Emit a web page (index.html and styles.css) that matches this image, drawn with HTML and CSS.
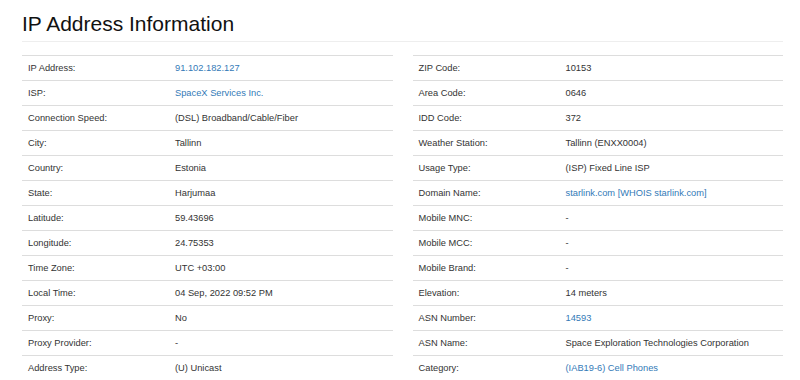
FILE: index.html
```html
<!DOCTYPE html>
<html>
<head>
<meta charset="utf-8">
<link rel="stylesheet" href="styles.css">
</head>
<body>
<div class="page">
  <h1 class="title">IP Address Information</h1>
  <div class="rule"></div>
  <div class="tables">
    <table class="info">
      <tr><td class="label">IP Address:</td><td><a class="link" href="#">91.102.182.127</a></td></tr>
      <tr><td class="label">ISP:</td><td><a class="link" href="#">SpaceX Services Inc.</a></td></tr>
      <tr><td class="label">Connection Speed:</td><td>(DSL) Broadband/Cable/Fiber</td></tr>
      <tr><td class="label">City:</td><td>Tallinn</td></tr>
      <tr><td class="label">Country:</td><td>Estonia</td></tr>
      <tr><td class="label">State:</td><td>Harjumaa</td></tr>
      <tr><td class="label">Latitude:</td><td>59.43696</td></tr>
      <tr><td class="label">Longitude:</td><td>24.75353</td></tr>
      <tr><td class="label">Time Zone:</td><td>UTC +03:00</td></tr>
      <tr><td class="label">Local Time:</td><td>04 Sep, 2022 09:52 PM</td></tr>
      <tr><td class="label">Proxy:</td><td>No</td></tr>
      <tr><td class="label">Proxy Provider:</td><td>-</td></tr>
      <tr><td class="label">Address Type:</td><td>(U) Unicast</td></tr>
    </table>
    <table class="info">
      <tr><td class="label">ZIP Code:</td><td>10153</td></tr>
      <tr><td class="label">Area Code:</td><td>0646</td></tr>
      <tr><td class="label">IDD Code:</td><td>372</td></tr>
      <tr><td class="label">Weather Station:</td><td>Tallinn (ENXX0004)</td></tr>
      <tr><td class="label">Usage Type:</td><td>(ISP) Fixed Line ISP</td></tr>
      <tr><td class="label">Domain Name:</td><td><a class="link" href="#">starlink.com [WHOIS starlink.com]</a></td></tr>
      <tr><td class="label">Mobile MNC:</td><td>-</td></tr>
      <tr><td class="label">Mobile MCC:</td><td>-</td></tr>
      <tr><td class="label">Mobile Brand:</td><td>-</td></tr>
      <tr><td class="label">Elevation:</td><td>14 meters</td></tr>
      <tr><td class="label">ASN Number:</td><td><a class="link" href="#">14593</a></td></tr>
      <tr><td class="label">ASN Name:</td><td>Space Exploration Technologies Corporation</td></tr>
      <tr><td class="label">Category:</td><td><a class="link" href="#">(IAB19-6) Cell Phones</a></td></tr>
    </table>
  </div>
</div>
</body>
</html>
```
FILE: styles.css
```css
html, body {
  margin: 0;
  padding: 0;
  background: #fff;
}
body {
  font-family: "Liberation Sans", Arial, Helvetica, sans-serif;
  color: #333;
  overflow: hidden;
}
.page {
  margin-left: 22px;
  width: 761px;
  padding-top: 12px;
}
.title {
  margin: 0;
  font-size: 21px;
  line-height: 24px;
  font-weight: 400;
  color: #111;
}
.rule {
  margin-top: 5px;
  border-top: 1px solid #eee;
}
.tables {
  display: flex;
  gap: 20px;
  margin-top: 13px;
}
.info {
  flex: 1;
  min-width: 0;
  table-layout: fixed;
  border-collapse: collapse;
  font-size: 9.3px;
  line-height: 14px;
}
.info td {
  border-top: 1px solid #ddd;
  padding: 5px 6px;
  white-space: nowrap;
}
.info td.label {
  width: 147px;
  box-sizing: border-box;
}
.link {
  color: #337ab7;
  text-decoration: none;
}
```
